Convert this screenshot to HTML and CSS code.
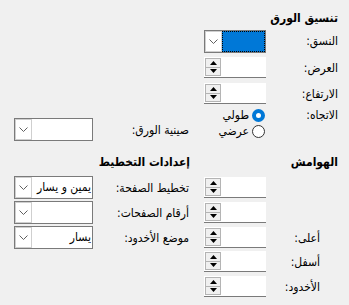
FILE: index.html
```html
<!DOCTYPE html>
<html lang="ar" dir="rtl">
<head>
    <meta charset="UTF-8">
    <title>إعداد الصفحة</title>
    <link rel="stylesheet" href="styles.css">
</head>
<body>
    <div class="dialog">
        <div class="row head-row">
            <div class="title">تنسيق الورق</div>
        </div>

        <div class="row combo-row">
            <label class="lbl">النسق:</label>
            <div class="combo focused">
                <span class="value"></span>
                <span class="drop"><svg width="9" height="5" viewBox="0 0 9 5"><path d="M0.5 0.5 L4.5 4.5 L8.5 0.5" fill="none" stroke="#606060"/></svg></span>
            </div>
        </div>

        <div class="row spin-row">
            <label class="lbl">العرض:</label>
            <div class="spin">
                <span class="value"></span>
                <span class="btns">
                    <span class="btn"><svg width="7" height="4" viewBox="0 0 7 4"><path d="M0 4 L3.5 0 L7 4 Z"/></svg></span>
                    <span class="btn"><svg width="7" height="4" viewBox="0 0 7 4"><path d="M0 0 L3.5 4 L7 0 Z"/></svg></span>
                </span>
            </div>
        </div>

        <div class="row spin-row">
            <label class="lbl">الارتفاع:</label>
            <div class="spin">
                <span class="value"></span>
                <span class="btns">
                    <span class="btn"><svg width="7" height="4" viewBox="0 0 7 4"><path d="M0 4 L3.5 0 L7 4 Z"/></svg></span>
                    <span class="btn"><svg width="7" height="4" viewBox="0 0 7 4"><path d="M0 0 L3.5 4 L7 0 Z"/></svg></span>
                </span>
            </div>
        </div>

        <div class="row orient-row">
            <label class="lbl top">الاتجاه:</label>
            <div class="radios">
                <div class="radio checked"><span class="dot"></span>طولي</div>
                <div class="radio"><span class="dot"></span>عرضي</div>
            </div>
            <label class="lbl left bottom">صينية الورق:</label>
            <div class="combo right-col tray">
                <span class="value"></span>
                <span class="drop"><svg width="9" height="5" viewBox="0 0 9 5"><path d="M0.5 0.5 L4.5 4.5 L8.5 0.5" fill="none" stroke="#606060"/></svg></span>
            </div>
        </div>

        <div class="row head-row second">
            <div class="title">الهوامش</div>
            <div class="title left">إعدادات التخطيط</div>
        </div>

        <div class="row margin-row">
            <label class="lbl indent"></label>
            <div class="spin">
                <span class="value"></span>
                <span class="btns">
                    <span class="btn"><svg width="7" height="4" viewBox="0 0 7 4"><path d="M0 4 L3.5 0 L7 4 Z"/></svg></span>
                    <span class="btn"><svg width="7" height="4" viewBox="0 0 7 4"><path d="M0 0 L3.5 4 L7 0 Z"/></svg></span>
                </span>
            </div>
            <label class="lbl left">تخطيط الصفحة:</label>
            <div class="combo right-col">
                <span class="value">يمين و يسار</span>
                <span class="drop"><svg width="9" height="5" viewBox="0 0 9 5"><path d="M0.5 0.5 L4.5 4.5 L8.5 0.5" fill="none" stroke="#606060"/></svg></span>
            </div>
        </div>

        <div class="row margin-row">
            <label class="lbl indent"></label>
            <div class="spin">
                <span class="value"></span>
                <span class="btns">
                    <span class="btn"><svg width="7" height="4" viewBox="0 0 7 4"><path d="M0 4 L3.5 0 L7 4 Z"/></svg></span>
                    <span class="btn"><svg width="7" height="4" viewBox="0 0 7 4"><path d="M0 0 L3.5 4 L7 0 Z"/></svg></span>
                </span>
            </div>
            <label class="lbl left">أرقام الصفحات:</label>
            <div class="combo right-col">
                <span class="value"></span>
                <span class="drop"><svg width="9" height="5" viewBox="0 0 9 5"><path d="M0.5 0.5 L4.5 4.5 L8.5 0.5" fill="none" stroke="#606060"/></svg></span>
            </div>
        </div>

        <div class="row margin-row">
            <label class="lbl indent">أعلى:</label>
            <div class="spin">
                <span class="value"></span>
                <span class="btns">
                    <span class="btn"><svg width="7" height="4" viewBox="0 0 7 4"><path d="M0 4 L3.5 0 L7 4 Z"/></svg></span>
                    <span class="btn"><svg width="7" height="4" viewBox="0 0 7 4"><path d="M0 0 L3.5 4 L7 0 Z"/></svg></span>
                </span>
            </div>
            <label class="lbl left">موضع الأخدود:</label>
            <div class="combo right-col">
                <span class="value">يسار</span>
                <span class="drop"><svg width="9" height="5" viewBox="0 0 9 5"><path d="M0.5 0.5 L4.5 4.5 L8.5 0.5" fill="none" stroke="#606060"/></svg></span>
            </div>
        </div>

        <div class="row margin-row">
            <label class="lbl indent">أسفل:</label>
            <div class="spin">
                <span class="value"></span>
                <span class="btns">
                    <span class="btn"><svg width="7" height="4" viewBox="0 0 7 4"><path d="M0 4 L3.5 0 L7 4 Z"/></svg></span>
                    <span class="btn"><svg width="7" height="4" viewBox="0 0 7 4"><path d="M0 0 L3.5 4 L7 0 Z"/></svg></span>
                </span>
            </div>
        </div>

        <div class="row margin-row">
            <label class="lbl indent">الأخدود:</label>
            <div class="spin">
                <span class="value"></span>
                <span class="btns">
                    <span class="btn"><svg width="7" height="4" viewBox="0 0 7 4"><path d="M0 4 L3.5 0 L7 4 Z"/></svg></span>
                    <span class="btn"><svg width="7" height="4" viewBox="0 0 7 4"><path d="M0 0 L3.5 4 L7 0 Z"/></svg></span>
                </span>
            </div>
        </div>
    </div>
</body>
</html>
```

FILE: styles.css
```css
body {
    margin: 0;
    background-color: #f0f0f0;
    font-family: "Segoe UI", "DejaVu Sans Condensed", "DejaVu Sans", sans-serif;
    font-size: 12px;
    color: #000;
}
.dialog {
    width: 349px;
    height: 305px;
    box-sizing: border-box;
    padding: 7px 11px 0 14px;
}
/* columns, right to left: label | control | gap | label | control */
.row {
    display: grid;
    grid-template-columns: 72px 62px 12px 99px 79px;
    align-items: center;
}
.row > .lbl, .row > .title { grid-column: 1; }
.row > .spin, .row > .combo { grid-column: 2; }
.row > .lbl.left, .row > .title.left { grid-column: 4; }
.row > .combo.right-col { grid-column: 5; }

.head-row {
    height: 22px;
}
.head-row.second {
    height: 20px;
    margin-top: 11px;
}
.title {
    font-weight: bold;
    line-height: 16px;
    white-space: nowrap;
}
.title.left {
    padding-right: 2px;
}
.lbl {
    line-height: 16px;
    white-space: nowrap;
}
.lbl.left {
    padding-right: 3px;
}
.lbl.indent {
    padding-right: 18px;
}
.lbl.top { align-self: start; }
.lbl.bottom { align-self: end; margin-bottom: 3px; }

.combo-row { height: 24px; }
.spin-row { height: 21px; margin-top: 4px; }
.spin-row + .spin-row { margin-top: 5px; }
.orient-row { height: 34px; margin-top: 3px; }
.margin-row { height: 21px; margin-top: 4px; }

/* combo box */
.combo {
    display: flex;
    height: 23px;
    box-sizing: border-box;
    border: 1px solid #7a7a7a;
    background: #fff;
}
.combo .value {
    flex: 1;
    padding-right: 1px;
    line-height: 20px;
    white-space: nowrap;
    overflow: hidden;
}
.combo .drop {
    width: 17px;
    box-sizing: border-box;
    border: 1px solid #cfcfcf;
    display: flex;
    align-items: center;
    justify-content: center;
}
.combo.focused .value {
    background: #0078d7;
    outline: 1px dotted #000;
    outline-offset: -1px;
}
.combo.tray {
    align-self: end;
}

/* spin box */
.spin {
    display: flex;
    height: 21px;
    box-sizing: border-box;
    background: #fff;
    border-bottom: 1px solid #7a7a7a;
}
.spin .value {
    flex: 1;
}
.spin .btns {
    width: 16px;
    margin-left: 1px;
    display: flex;
    flex-direction: column;
    padding: 1px 0;
    box-sizing: border-box;
}
.spin .btn {
    flex: 1;
    border: 1px solid #b4b4b4;
    background: #f0f0f0;
    display: flex;
    align-items: center;
    justify-content: center;
}
.spin .btn + .btn {
    border-top: none;
}
.spin .btn svg {
    fill: #000;
}

/* radio buttons */
.radios {
    align-self: start;
    grid-column: 2 / 4;
}
.radio {
    display: flex;
    align-items: center;
    gap: 3px;
    height: 16px;
    padding-right: 1px;
}
.radio .dot {
    width: 13px;
    height: 13px;
    box-sizing: border-box;
    border-radius: 50%;
    border: 1px solid #333;
    background: #fff;
}
.radio.checked .dot {
    border: 4px solid #0078d7;
    background: #fff;
}
```
